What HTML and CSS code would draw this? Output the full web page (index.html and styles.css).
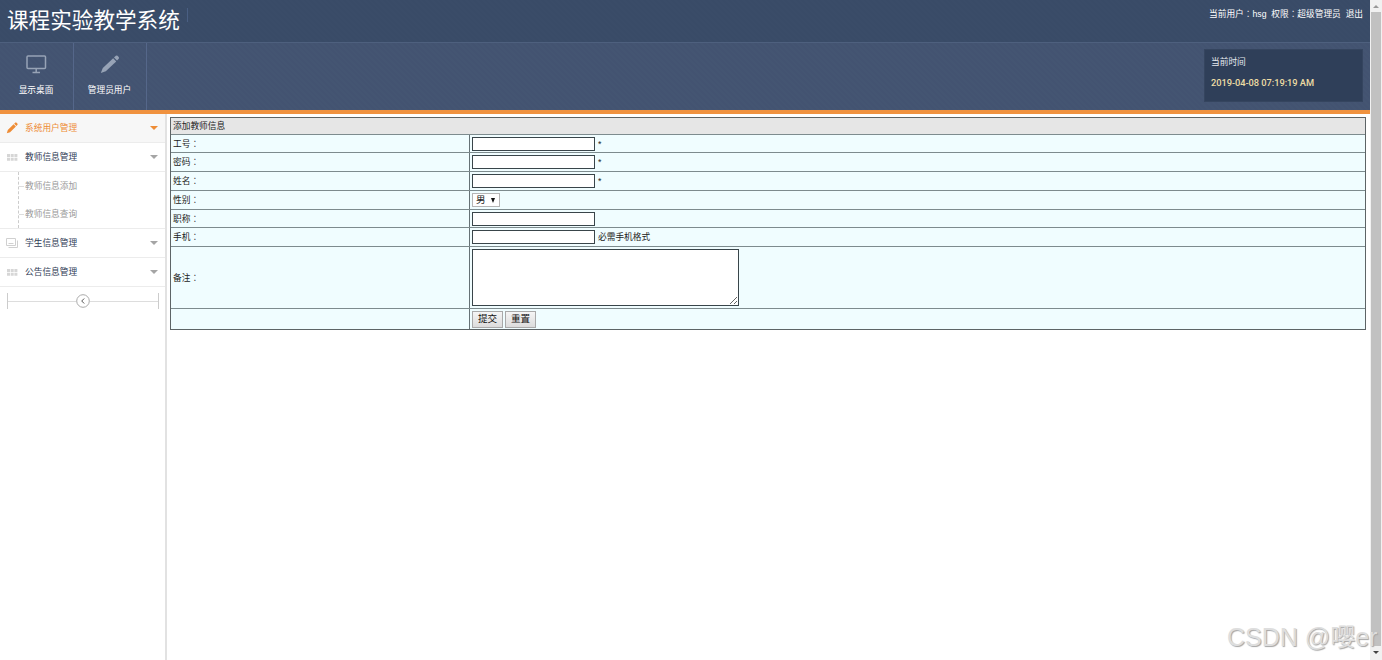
FILE: index.html
```
<!DOCTYPE html>
<html lang="zh-CN">
<head>
    <meta charset="UTF-8">
    <title>课程实验教学系统</title>
    <link rel="stylesheet" href="styles.css">
</head>
<body>
<div class="page">
    <div class="top">
        <div class="title">课程实验教学系统</div>
        <div class="user">当前用户<em lang="zh-TW">：</em>hsg&nbsp; 权限<em lang="zh-TW">：</em>超级管理员&nbsp; <a>退出</a></div>
    </div>
    <div class="nav">
        <a class="nav-item">
            <svg width="21" height="19" viewBox="0 0 21 19" fill="none" stroke="#97a3b6" stroke-width="1.5">
                <rect x="1" y="1" width="18.5" height="12.5" rx="1"/>
                <path d="M10.2 13.5v4M6.5 17.6h7.5"/>
            </svg>
            <span>显示桌面</span>
        </a>
        <a class="nav-item">
            <svg width="21" height="19" viewBox="0 0 21 19" fill="#97a3b6">
                <path d="M1.800 18l2-5L14.200 3.300l3 3.200L6.800 16.300z"/>
                <path d="M15 2.500L16.800.8q.9-.7 1.700 0l1.200 1.300q.7.9 0 1.700L18 5.600z"/>
            </svg>
            <span>管理员用户</span>
        </a>
        <div class="clock">
            <p>当前时间</p>
            <p class="time">2019-04-08 07:19:19 AM</p>
        </div>
    </div>
    <div class="main">
        <div class="side">
            <div class="menu cur">
                <svg width="12" height="12" viewBox="0 0 12 12" fill="#ee8c35">
                    <path d="M.8 11.300l1-3.300 5.800-5.700 2.300 2.300-5.800 5.700zM8.200 1.700L9.300.6q.5-.4 1 0l1.200 1.200q.4.500 0 1l-1.100 1.100z"/>
                </svg>
                <span>系统用户管理</span><i></i>
            </div>
            <div class="menu">
                <svg width="12" height="12" viewBox="0 0 12 12" fill="#d6d6d6">
                    <path d="M1 3h3v3H1zM4.700 3h3v3h-3zM8.400 3h3v3h-3zM1 6.700h3v3H1zM4.700 6.700h3v3h-3zM8.400 6.700h3v3h-3z"/>
                </svg>
                <span>教师信息管理</span><i></i>
            </div>
            <div class="sub">
                <a>教师信息添加</a>
                <a>教师信息查询</a>
            </div>
            <div class="menu">
                <svg width="12" height="12" viewBox="0 0 12 12" fill="none" stroke="#d0d0d0">
                    <path d="M.5 1.500h9v7h-9zM2.500 10.500h9v-7M2.500 6.500h5"/>
                </svg>
                <span>学生信息管理</span><i></i>
            </div>
            <div class="menu">
                <svg width="12" height="12" viewBox="0 0 12 12" fill="#d6d6d6">
                    <path d="M1 3h3v3H1zM4.700 3h3v3h-3zM8.400 3h3v3h-3zM1 6.700h3v3H1zM4.700 6.700h3v3h-3zM8.400 6.700h3v3h-3z"/>
                </svg>
                <span>公告信息管理</span><i></i>
            </div>
            <div class="fold">
                <div class="line"></div>
                <svg width="14" height="14" viewBox="0 0 14 14" fill="none">
                    <circle cx="7" cy="7" r="6.300" stroke="#aaa"/>
                    <path d="M8.200 4.500L5.700 7l2.500 2.500" stroke="#555"/>
                </svg>
                <div class="line right"></div>
            </div>
        </div>
        <form class="form">
            <div class="caption">添加教师信息</div>
            <div class="row"><label>工号<em lang="zh-TW">：</em></label><div><input type="text"><span>*</span></div></div>
            <div class="row tall"><label>密码<em lang="zh-TW">：</em></label><div><input type="text"><span>*</span></div></div>
            <div class="row tall"><label>姓名<em lang="zh-TW">：</em></label><div><input type="text"><span>*</span></div></div>
            <div class="row tall"><label>性别<em lang="zh-TW">：</em></label><div><span class="select">男<b></b></span></div></div>
            <div class="row"><label>职称<em lang="zh-TW">：</em></label><div><input type="text"></div></div>
            <div class="row tall"><label>手机<em lang="zh-TW">：</em></label><div><input type="text"><span>必需手机格式</span></div></div>
            <div class="row memo"><label>备注<em lang="zh-TW">：</em></label><div><textarea></textarea></div></div>
            <div class="row btns"><label></label><div><button type="button">提交</button><button type="button">重置</button></div></div>
        </form>
    </div>
</div>
<div class="scroll">
    <i class="up"></i>
    <div class="thumb"></div>
    <i class="down"></i>
</div>
<div class="mark">CSDN @嘤er</div>
</body>
</html>
```
FILE: styles.css
```
*{
    margin: 0;
    padding: 0;
    box-sizing: border-box;
}
body{
    display: flex;
    height: 660px;
    overflow: hidden;
    background: #fff;
    font: 8.7px/14px "Liberation Sans", "Noto Sans CJK SC", sans-serif;
    color: #222;
}
em{
    font-style: normal;
    font-family: "Noto Sans CJK TC", sans-serif;
}
.page{
    width: 1370px;
    display: flex;
    flex-direction: column;
}
.top{
    height: 42px;
    display: flex;
    justify-content: space-between;
    padding: 0 7px;
    background: repeating-linear-gradient(45deg, #394b67 0, #394b67 2px, #3a4c68 2px, #3a4c68 4px);
    color: #fff;
}
.title{
    height: 14px;
    margin-top: 8px;
    padding-right: 7px;
    border-right: 1px solid #4a5f83;
    font-size: 21.6px;
    line-height: 25px;
    white-space: nowrap;
}
.user{
    padding-top: 7px;
}
.nav{
    height: 68px;
    display: flex;
    border-top: 1px solid #4e607e;
    background: repeating-linear-gradient(45deg, #435371 0, #435371 2px, #445572 2px, #445572 4px);
    color: #fff;
}
.nav-item{
    width: 73px;
    display: flex;
    flex-direction: column;
    align-items: center;
    padding: 12px 1px 0 0;
    border-right: 1px solid #55678a;
}
.nav-item:first-child{
    width: 74px;
}
.nav-item span{
    margin-top: 9px;
}
.clock{
    width: 159px;
    height: 53px;
    margin: 6px 7px 0 auto;
    padding: 5px 6px;
    background: #2f3f59;
    border: 1px solid #35455f;
    color: #e5e8ee;
}
.clock .time{
    margin-top: 7px;
    font-family: Roboto, sans-serif;
    font-weight: 500;
    font-size: 9.3px;
    letter-spacing: -0.05px;
    color: #eddca4;
    white-space: nowrap;
}
.main{
    flex: 1;
    display: flex;
    border-top: 4px solid #f0923f;
}
.side{
    width: 167px;
    border-right: 2px solid #e2e2e2;
}
.menu{
    height: 29px;
    display: flex;
    align-items: center;
    padding: 0 7px 0 6px;
    border-bottom: 1px solid #ececec;
    color: #2f3b55;
}
.menu span{
    flex: 1;
    margin-left: 7px;
}
.menu i{
    border: 4px solid transparent;
    border-top-color: #a5a5a5;
    border-bottom: 0;
}
.menu.cur{
    background: #f7f7f7;
    color: #ee8c35;
}
.menu.cur i{
    border-top-color: #ee8c35;
}
.sub{
    height: 56px;
    margin-left: 18px;
    border-left: 1px dashed #ccc;
}
.sub + .menu{
    height: 30px;
    border-top: 1px solid #ececec;
}
.sub a{
    height: 28px;
    display: flex;
    align-items: center;
    color: #999;
}
.sub a::before{
    content: "";
    width: 5px;
    margin-right: 1px;
    border-top: 1px dashed #ddd;
}
.fold{
    display: flex;
    align-items: center;
    margin: 6px 6px 0 7px;
}
.line{
    flex: 1;
    height: 16px;
    border-left: 1px solid #ccc;
    background: linear-gradient(#ddd, #ddd) 0 8px / 100% 1px no-repeat;
}
.line.right{
    border-left: 0;
    border-right: 1px solid #ccc;
}
.form{
    width: 1196px;
    height: 213px;
    margin: 3px 0 0 3px;
    border: 1px solid #5d6466;
    background: #f0fdff;
}
.caption{
    height: 16px;
    padding-left: 2px;
    line-height: 16px;
    background: #e6e6e6;
}
.row{
    height: 18px;
    display: flex;
    border-top: 1px solid #7d8b8e;
}
.row.tall{
    height: 19px;
}
.row.memo{
    height: 62px;
}
.row.btns{
    height: 21px;
}
.row label{
    width: 298px;
    display: flex;
    align-items: center;
    padding-left: 2px;
}
.row > div{
    flex: 1;
    display: flex;
    align-items: center;
    padding-left: 2px;
    border-left: 1px solid #667276;
}
input{
    width: 123px;
    height: 14px;
    border: 1px solid #39454a;
    background: #fff;
}
.row span{
    margin-left: 3px;
}
.row .select{
    width: 28px;
    height: 14px;
    display: flex;
    align-items: center;
    justify-content: space-between;
    margin: 0;
    padding: 0 4px 0 3px;
    border: 1px solid #b5b5b5;
    background: #fff;
    font-size: 9.5px;
}
.select b{
    border: 2.500px solid transparent;
    border-top: 5px solid #111;
    border-bottom: 0;
}
textarea{
    width: 267px;
    height: 57px;
    border: 1px solid #39454a;
    background: #fff;
}
button{
    width: 31px;
    height: 17px;
    margin-right: 2px;
    border: 1px solid #a9a9a9;
    background: linear-gradient(#f5f5f5, #dcdcdc);
    font: 9.6px/14px "Liberation Sans", "Noto Sans CJK SC", sans-serif;
    color: #111;
}
.scroll{
    width: 12px;
    display: flex;
    flex-direction: column;
    align-items: center;
    background: #f1f1f1;
}
.scroll i{
    border: 3px solid transparent;
}
.scroll .up{
    margin-top: 5px;
    border-top: 0;
    border-bottom-color: #999;
}
.thumb{
    width: 10px;
    height: 634px;
    margin-top: 4px;
    background: #c1c1c1;
}
.scroll .down{
    margin-top: 5px;
    border-bottom: 0;
    border-top-color: #444;
}
.mark{
    position: absolute;
    left: 1227px;
    bottom: 8px;
    font-size: 25px;
    line-height: 30px;
    color: #dedede;
    text-shadow: 1px 1px 1px #a5a5a5;
    white-space: nowrap;
}
```
